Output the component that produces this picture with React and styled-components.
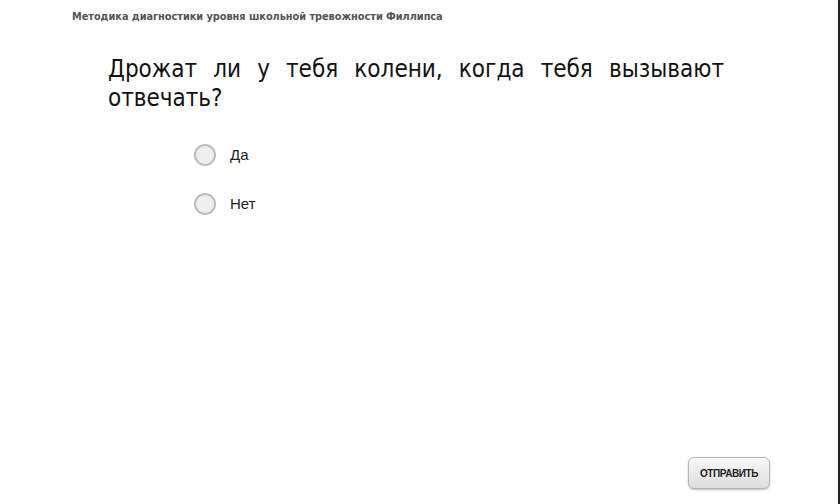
import React, { useState } from 'react';
import styled, { createGlobalStyle } from 'styled-components';

const GlobalStyle = createGlobalStyle`
  html, body {
    margin: 0;
    padding: 0;
    background: #fff;
  }
  #root {
    height: 504px;
  }
`;

const Page = styled.div`
  box-sizing: border-box;
  width: 840px;
  height: 504px;
  border-right: 2px solid #222;
  display: flex;
  flex-direction: column;
  font-family: "DejaVu Sans Condensed", "Liberation Sans", sans-serif;
`;

const Title = styled.div`
  padding: 11px 0 0 72px;
  font-family: "DejaVu Sans", Verdana, sans-serif;
  font-size: 9.8px;
  font-weight: bold;
  color: #555;
  letter-spacing: -0.05px;
`;

const Question = styled.h1`
  margin: 33px 0 0 108px;
  width: 616px;
  font-family: "DejaVu Sans Condensed", "Liberation Sans", sans-serif;
  font-weight: normal;
  font-size: 24px;
  line-height: 29px;
  color: #111;
  text-align: justify;
`;

const Options = styled.div`
  display: flex;
  flex-direction: column;
  gap: 26px;
  margin: 30px 0 0 194px;
`;

const Option = styled.label`
  display: flex;
  align-items: center;
  gap: 14px;
  font-family: "Liberation Sans", Arial, sans-serif;
  font-size: 15px;
  color: #222;
  cursor: pointer;
  height: 23px;
`;

const Radio = styled.span`
  box-sizing: border-box;
  width: 22px;
  height: 22px;
  border-radius: 50%;
  border: 2px solid #bdbdbd;
  background: ${p => (p.checked ? 'radial-gradient(circle, #666 0 4px, #eee 5px)' : '#efefef')};
`;

const Footer = styled.div`
  margin-top: auto;
  display: flex;
  justify-content: flex-end;
  padding: 0 68px 15px 0;
`;

const SubmitButton = styled.button`
  width: 82px;
  height: 32px;
  border: 1px solid #b5b5b5;
  border-radius: 6px;
  background: linear-gradient(#fafafa, #dcdcdc);
  box-shadow: 0 1px 2px rgba(0, 0, 0, 0.25);
  font-family: "Liberation Sans", Arial, sans-serif;
  font-size: 10px;
  font-weight: bold;
  color: #222;
  letter-spacing: -0.4px;
  cursor: pointer;
`;

const answers = ['Да', 'Нет'];

export default function App() {
  const [choice, setChoice] = useState(null);

  return (
    <>
      <GlobalStyle />
      <Page>
        <Title>Методика диагностики уровня школьной тревожности Филлипса</Title>
        <Question>Дрожат ли у тебя колени, когда тебя вызывают отвечать?</Question>
        <Options>
          {answers.map(a => (
            <Option key={a} onClick={() => setChoice(a)}>
              <Radio checked={choice === a} />
              {a}
            </Option>
          ))}
        </Options>
        <Footer>
          <SubmitButton>ОТПРАВИТЬ</SubmitButton>
        </Footer>
      </Page>
    </>
  );
}
